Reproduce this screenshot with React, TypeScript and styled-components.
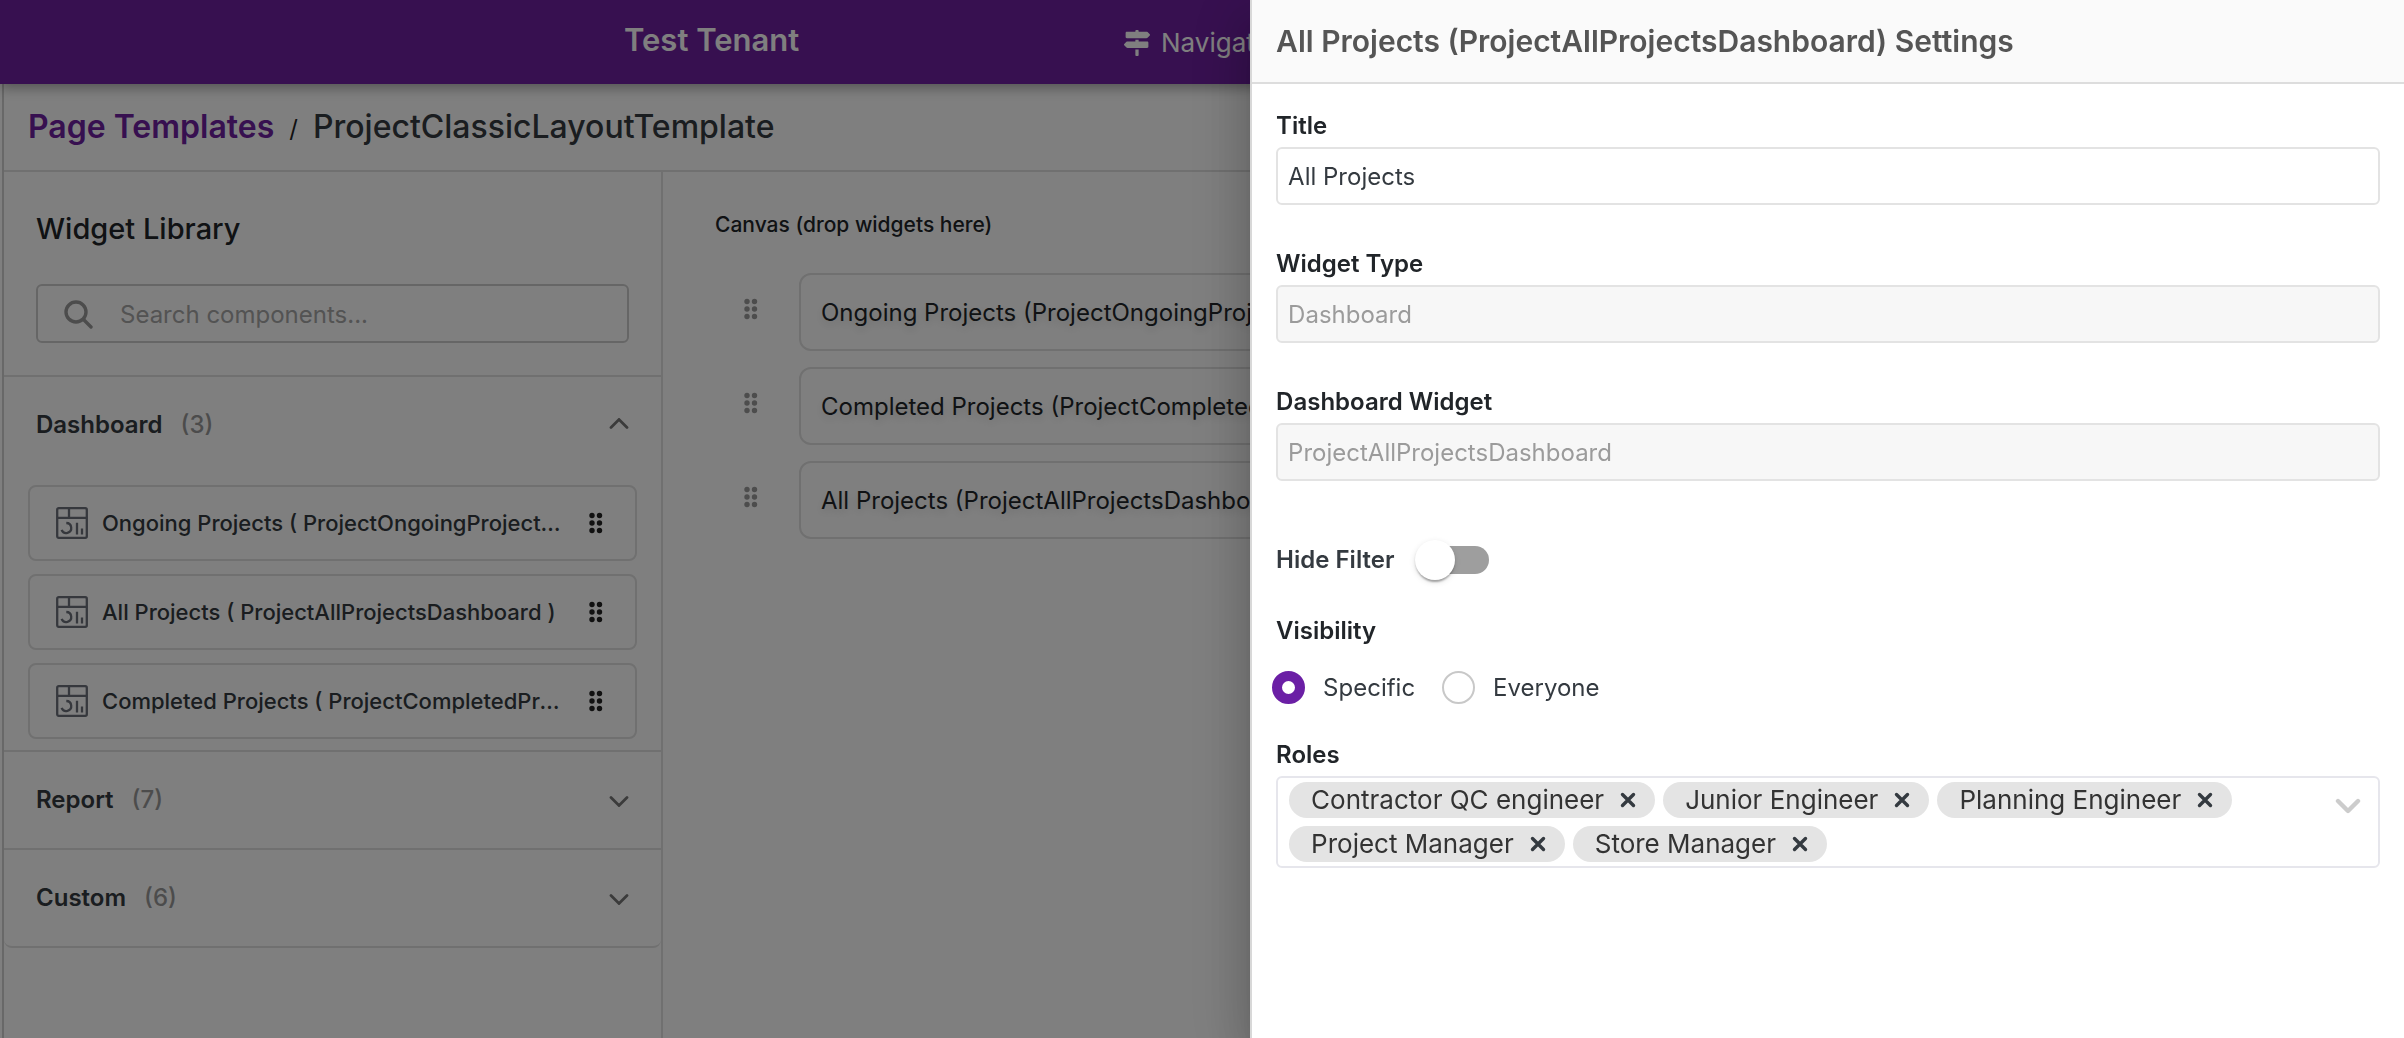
import React, { useId, useState } from "react";
import styled, { createGlobalStyle } from "styled-components";
import { FaMapSigns } from "react-icons/fa";

const GlobalStyle = createGlobalStyle`
  *, *::before, *::after { box-sizing: border-box; }
  body {
    margin: 0;
    overflow: hidden;
    background: #fff;
    color: #212529;
    font-family: Inter, "Liberation Sans", sans-serif;
    font-size: 24px;
    line-height: 32px;
  }
  h1, h2, h3, p, ul, ol, fieldset, legend { margin: 0; padding: 0; border: 0; }
  ul, ol { list-style: none; }
  button, input { font: inherit; color: inherit; }
  button { background: none; border: 0; padding: 0; cursor: pointer; }
`;

const Page = styled.div`
  display: flex;
  flex-direction: column;
  min-height: 100vh;
`;

const TopBar = styled.header`
  display: grid;
  grid-template-columns: 624px 500px 1fr;
  align-items: center;
  height: 84px;
  background: #6e20a0;
  color: #fff;
  box-shadow: 0 4px 12px rgba(0, 0, 0, 0.35);
  z-index: 1;
`;

const Tenant = styled.span`
  grid-column: 2;
  font-size: 31px;
  font-weight: 600;
  padding-bottom: 4px;
`;

const NavLink = styled.a`
  display: flex;
  align-items: center;
  gap: 11px;
  padding-top: 2px;
  color: inherit;
  font-size: 26px;
  text-decoration: none;
`;

const Shell = styled.div`
  display: flex;
  flex: 1;
  flex-direction: column;
  margin-left: 2px;
  border-left: 2px solid #d0d0d0;
`;

const Breadcrumb = styled.nav`
  display: flex;
  align-items: center;
  height: 88px;
  padding: 0 24px;
  border-bottom: 2px solid #e0e0e0;
  color: #343a40;
  font-size: 32px;
  font-weight: 500;
`;

const Crumb = styled.a`
  color: #6e20a0;
  font-weight: 600;
  text-decoration: none;
`;

const Slash = styled.span`
  padding: 3px 15px 0;
  color: #222;
  font-size: 24px;
  font-weight: 400;
`;

const Columns = styled.div`
  display: flex;
  flex: 1;
`;

const Library = styled.aside`
  flex: none;
  width: 659px;
  border-right: 2px solid #e0e0e0;
`;

const LibraryTop = styled.div`
  padding: 39px 32px 32px;
  border-bottom: 2px solid #e0e0e0;
`;

const LibraryTitle = styled.h2`
  font-size: 29px;
  font-weight: 500;
  line-height: 36px;
  color: #212529;
`;

const SearchBox = styled.label`
  display: flex;
  align-items: center;
  gap: 27px;
  height: 59px;
  margin-top: 37px;
  padding: 2px 26px 0;
  border: 2px solid #cccccc;
  border-radius: 6px;
  color: #999;
`;

const SearchInput = styled.input`
  flex: 1;
  min-width: 0;
  padding: 0;
  border: 0;
  outline: 0;
  background: none;
  &::placeholder { color: #a6a6a6; opacity: 1; }
`;

const Group = styled.section`
  border-bottom: 2px solid #e0e0e0;
  &:last-child { border-radius: 0 0 8px 8px; }
`;

const GroupToggle = styled.button`
  display: flex;
  align-items: center;
  gap: 18px;
  width: 100%;
  height: 96px;
  padding: 0 32px;
  font-weight: 600;
  color: #343a40;
`;

const Count = styled.span`
  flex: 1;
  font-weight: 500;
  text-align: left;
  color: #999;
`;

const WidgetList = styled.ul`
  display: flex;
  flex-direction: column;
  gap: 13px;
  padding: 12px 24px 11px;
`;

const WidgetCard = styled.li`
  display: flex;
  align-items: center;
  gap: 14px;
  height: 76px;
  padding: 0 32px 0 26px;
  border: 2px solid #e0e0e0;
  border-radius: 8px;
  font-size: 22px;
  font-weight: 500;
  color: #343a40;
`;

const WidgetName = styled.span`
  flex: 1;
  overflow: hidden;
  white-space: nowrap;
  text-overflow: ellipsis;
  margin-right: 10px;
`;

const WidgetHandle = styled.span`
  display: flex;
  color: #222;
`;

const Canvas = styled.main`
  flex: 1;
  min-width: 0;
  padding: 37px 52px;
`;

const CanvasTitle = styled.h2`
  font-size: 21px;
  font-weight: 500;
  line-height: 32px;
`;

const Slots = styled.ul`
  display: flex;
  flex-direction: column;
  gap: 16px;
  padding-top: 32px;
`;

const Slot = styled.li`
  display: flex;
  align-items: center;
  gap: 41px;
  padding-left: 29px;
`;

const Handle = styled.span`
  display: flex;
  color: #9a9a9a;
  padding-bottom: 6px;
`;

const SlotCard = styled.div`
  flex: 1;
  height: 78px;
  padding: 22px 20px 20px;
  border: 2px solid #e0e0e0;
  border-radius: 12px;
  white-space: nowrap;
  text-shadow: 0 4px 8px rgba(0, 0, 0, 0.15);
`;

const Backdrop = styled.div`
  position: fixed;
  inset: 0;
  z-index: 10;
  background: rgba(0, 0, 0, 0.5);
`;

const Drawer = styled.aside`
  position: fixed;
  top: 0;
  right: 0;
  bottom: 0;
  z-index: 11;
  width: 48%;
  overflow: auto;
  background: #fff;
  border-left: 2px solid #d8d8d8;
  box-shadow: 0 16px 20px -10px rgba(0, 0, 0, 0.2),
    0 32px 48px 4px rgba(0, 0, 0, 0.14), 0 12px 60px 10px rgba(0, 0, 0, 0.12);
`;

const DrawerHeader = styled.header`
  display: flex;
  align-items: center;
  height: 84px;
  padding: 0 24px;
  background: #fafafa;
  border-bottom: 2px solid #dddddd;
`;

const DrawerTitle = styled.h1`
  font-size: 30px;
  font-weight: 600;
  color: #555;
`;

const Form = styled.form`
  display: flex;
  flex-direction: column;
  padding: 26px 24px;
`;

const Field = styled.div`
  display: flex;
  flex-direction: column;
  gap: 5px;
  margin-bottom: 43px;
`;

const Label = styled.label`
  font-weight: 600;
`;

const TextBox = styled.input`
  height: 58px;
  padding: 0 10px;
  border: 2px solid #e3e3e3;
  border-radius: 6px;
  outline: 0;
  background: #fff;
  color: #343a40;
  &:disabled { background: #f7f7f7; color: #9b9b9b; }
`;

const SwitchRow = styled.label`
  display: flex;
  align-items: center;
  align-self: flex-start;
  gap: 27px;
  height: 40px;
  margin: 16px 0 35px;
  font-weight: 600;
  color: #343a40;
`;

const Switch = styled.input`
  appearance: none;
  display: flex;
  align-items: center;
  width: 68px;
  height: 28px;
  margin: 0;
  border-radius: 14px;
  background: #9e9e9e;
  &::before {
    content: "";
    width: 40px;
    height: 40px;
    margin-left: -6px;
    border-radius: 50%;
    background: #fff;
    box-shadow: 0 4px 2px -2px rgba(0, 0, 0, 0.2),
      0 2px 2px rgba(0, 0, 0, 0.14), 0 2px 6px rgba(0, 0, 0, 0.12);
  }
  &:checked { background: #6e20a0; }
  &:checked::before { margin-left: 34px; }
`;

const RadioSet = styled.fieldset`
  margin-bottom: 35px;
`;

const Legend = styled.legend`
  margin-bottom: 24px;
  font-weight: 600;
`;

const RadioRow = styled.div`
  display: flex;
  gap: 27px;
  margin-left: -4px;
`;

const RadioLabel = styled.label`
  display: flex;
  align-items: center;
  gap: 18px;
  color: #343a40;
`;

const Radio = styled.input`
  appearance: none;
  width: 33px;
  height: 33px;
  margin: 0;
  border: 2px solid #c8c8c8;
  border-radius: 50%;
  background: #fff;
  &:checked { border: 10px solid #6b1fa5; }
`;

const RoleBox = styled.div`
  display: flex;
  align-items: flex-start;
  min-height: 92px;
  padding: 4px 17px 4px 11px;
  border: 2px solid #e6e6ec;
  border-radius: 6px;
`;

const Chips = styled.div`
  display: flex;
  flex: 1;
  flex-wrap: wrap;
  gap: 8px;
  padding-right: 60px;
`;

const Chip = styled.span`
  display: flex;
  align-items: center;
  gap: 16px;
  height: 36px;
  padding: 0 19px 0 22px;
  border-radius: 18px;
  background: #e4e4e4;
  color: #333;
  font-size: 26px;
`;

const ChipRemove = styled.button`
  display: flex;
  color: #343a40;
`;

const RoleInput = styled.input`
  width: 20px;
  height: 36px;
  padding: 0;
  border: 0;
  outline: 0;
  background: none;
`;

const RoleToggle = styled.button`
  display: flex;
  padding-top: 16px;
  color: #ccc;
`;

function Dots() {
  return (
    <svg width="14" height="22" viewBox="0 0 14 22" fill="currentColor" aria-hidden="true">
      {[3.5, 11, 18.5].map((y) => (
        <React.Fragment key={y}>
          <circle cx="3" cy={y} r="2.7" />
          <circle cx="10.5" cy={y} r="2.7" />
        </React.Fragment>
      ))}
    </svg>
  );
}

function Chevron({ up }: { up?: boolean }) {
  return (
    <svg width="20" height="14" viewBox="0 0 20 14" fill="none" stroke="#777" strokeWidth="2.8" strokeLinecap="round" aria-hidden="true">
      <path d={up ? "M2 9.5 10 1.5 18 9.5" : "M2 4.500 10 12.500 18 4.500"} />
    </svg>
  );
}

function SearchIcon() {
  return (
    <svg width="29" height="29" viewBox="0 0 29 29" fill="none" stroke="currentColor" strokeWidth="3.4" strokeLinecap="round" aria-hidden="true">
      <circle cx="12" cy="12" r="10" />
      <path d="m19.5 19.5 7.5 7.5" />
    </svg>
  );
}

function WidgetIcon() {
  return (
    <svg width="32" height="32" viewBox="0 0 32 32" fill="none" stroke="#6c717b" strokeWidth="2.3" aria-hidden="true">
      <rect x="1.2" y="1.2" width="29.6" height="29.6" rx="1.5" />
      <path d="M1 10.8h30M13 1v10" />
      <path d="M10.3 16a5 5 0 1 1-4.700 6.900" />
      <path d="M21 15.800v11.700M26 21.500v6" />
    </svg>
  );
}

function Cross() {
  return (
    <svg width="16" height="16" viewBox="0 0 16 16" fill="none" stroke="currentColor" strokeWidth="3.4" strokeLinecap="round" aria-hidden="true">
      <path d="m2.500 2.500 11 11M13.500 2.500l-11 11" />
    </svg>
  );
}

const dashboardWidgets = [
  "Ongoing Projects ( ProjectOngoingProjectsDashboard )",
  "All Projects ( ProjectAllProjectsDashboard )",
  "Completed Projects ( ProjectCompletedProjectsDashboard )",
];

const groups = [
  { name: "Dashboard", count: 3, widgets: dashboardWidgets },
  { name: "Report", count: 7, widgets: [] as string[] },
  { name: "Custom", count: 6, widgets: [] as string[] },
];

const slots = [
  "Ongoing Projects (ProjectOngoingProjectsDashboard)",
  "Completed Projects (ProjectCompletedProjectsDashboard)",
  "All Projects (ProjectAllProjectsDashboard)",
];

const initialRoles = [
  "Contractor QC engineer",
  "Junior Engineer",
  "Planning Engineer",
  "Project Manager",
  "Store Manager",
];

function TextField({ label, value, disabled }: { label: string; value: string; disabled?: boolean }) {
  const id = useId();
  return (
    <Field>
      <Label htmlFor={id}>{label}</Label>
      <TextBox id={id} type="text" defaultValue={value} disabled={disabled} />
    </Field>
  );
}

function WidgetGroup({ name, count, widgets }: { name: string; count: number; widgets: string[] }) {
  const [open, setOpen] = useState(widgets.length > 0);
  return (
    <Group>
      <GroupToggle type="button" aria-expanded={open} onClick={() => setOpen(!open)}>
        <span>{name}</span>
        <Count>({count})</Count>
        <Chevron up={open} />
      </GroupToggle>
      {open && widgets.length > 0 && (
        <WidgetList>
          {widgets.map((w) => (
            <WidgetCard key={w}>
              <WidgetIcon />
              <WidgetName>{w}</WidgetName>
              <WidgetHandle><Dots /></WidgetHandle>
            </WidgetCard>
          ))}
        </WidgetList>
      )}
    </Group>
  );
}

export default function App() {
  const [roles, setRoles] = useState(initialRoles);
  const [visibility, setVisibility] = useState("Specific");

  return (
    <>
      <GlobalStyle />
      <Page>
        <TopBar>
          <Tenant>Test Tenant</Tenant>
          <NavLink href="#navigation">
            <FaMapSigns size={26} />
            Navigation
          </NavLink>
        </TopBar>
        <Shell>
          <Breadcrumb aria-label="Breadcrumb">
            <Crumb href="#templates">Page Templates</Crumb>
            <Slash>/</Slash>
            <span>ProjectClassicLayoutTemplate</span>
          </Breadcrumb>
          <Columns>
            <Library>
              <LibraryTop>
                <LibraryTitle>Widget Library</LibraryTitle>
                <SearchBox>
                  <SearchIcon />
                  <SearchInput type="search" placeholder="Search components..." aria-label="Search components" />
                </SearchBox>
              </LibraryTop>
              {groups.map((g) => (
                <WidgetGroup key={g.name} {...g} />
              ))}
            </Library>
            <Canvas>
              <CanvasTitle>Canvas (drop widgets here)</CanvasTitle>
              <Slots>
                {slots.map((s) => (
                  <Slot key={s}>
                    <Handle><Dots /></Handle>
                    <SlotCard>{s}</SlotCard>
                  </Slot>
                ))}
              </Slots>
            </Canvas>
          </Columns>
        </Shell>
      </Page>
      <Backdrop />
      <Drawer aria-label="Widget settings">
        <DrawerHeader>
          <DrawerTitle>All Projects (ProjectAllProjectsDashboard) Settings</DrawerTitle>
        </DrawerHeader>
        <Form>
          <TextField label="Title" value="All Projects" />
          <TextField label="Widget Type" value="Dashboard" disabled />
          <TextField label="Dashboard Widget" value="ProjectAllProjectsDashboard" disabled />
          <SwitchRow>
            Hide Filter
            <Switch type="checkbox" role="switch" />
          </SwitchRow>
          <RadioSet>
            <Legend>Visibility</Legend>
            <RadioRow>
              {["Specific", "Everyone"].map((v) => (
                <RadioLabel key={v}>
                  <Radio type="radio" name="visibility" checked={visibility === v} onChange={() => setVisibility(v)} />
                  {v}
                </RadioLabel>
              ))}
            </RadioRow>
          </RadioSet>
          <Field>
            <Label htmlFor="roles">Roles</Label>
            <RoleBox>
              <Chips>
                {roles.map((r) => (
                  <Chip key={r}>
                    {r}
                    <ChipRemove type="button" aria-label={`Remove ${r}`} onClick={() => setRoles(roles.filter((x) => x !== r))}>
                      <Cross />
                    </ChipRemove>
                  </Chip>
                ))}
                <RoleInput id="roles" type="text" role="combobox" aria-expanded={false} />
              </Chips>
              <RoleToggle type="button" aria-label="Show roles">
                <svg width="26" height="16" viewBox="0 0 26 16" fill="none" stroke="currentColor" strokeWidth="4.4" strokeLinecap="round" strokeLinejoin="round" aria-hidden="true">
                  <path d="M3 3l10 10L23 3" />
                </svg>
              </RoleToggle>
            </RoleBox>
          </Field>
        </Form>
      </Drawer>
    </>
  );
}
